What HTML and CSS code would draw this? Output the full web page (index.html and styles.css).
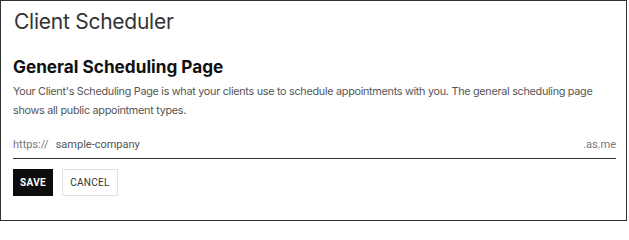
FILE: index.html
```html
<!DOCTYPE html>
<html>
<head>
<meta charset="utf-8">
<link rel="stylesheet" href="styles.css">
</head>
<body>
<div class="card">
  <h1 class="title">Client Scheduler</h1>
  <h2 class="section">General Scheduling Page</h2>
  <p class="desc">Your Client's Scheduling Page is what your clients use to schedule appointments with you. The general scheduling page shows all public appointment types.</p>
  <div class="field">
    <span class="prefix">https://</span>
    <span class="value">sample-company</span>
    <span class="suffix">.as.me</span>
  </div>
  <div class="actions">
    <button class="btn btn-save">SAVE</button>
    <button class="btn btn-cancel">CANCEL</button>
  </div>
</div>
</body>
</html>
```
FILE: styles.css
```css
html, body {
  margin: 0;
  padding: 0;
  background: #fff;
}
.card {
  box-sizing: border-box;
  width: 627px;
  height: 221px;
  border: 1px solid #333;
  padding: 8px 12px 0 12px;
  font-family: Inter, "Noto Sans", sans-serif;
}
.title {
  margin: 0 0 0 1px;
  font-size: 21px;
  letter-spacing: -0.25px;
  font-weight: 400;
  line-height: 26px;
  color: #333;
}
.section {
  margin: 21px 0 0 0;
  font-size: 17.2px;
  font-weight: 700;
  line-height: 22px;
  color: #111;
}
.desc {
  margin: 4px 0 0 0;
  font-size: 10.8px;
  letter-spacing: -0.28px;
  line-height: 19px;
  color: #555;
  max-width: 603px;
}
.field {
  display: flex;
  align-items: baseline;
  margin-top: 18px;
  padding: 0 0 6px 0;
  border-bottom: 1.5px solid #333;
  width: 603px;
  font-family: Roboto, "Liberation Sans", sans-serif;
  font-size: 11px;
  line-height: 14px;
}
.prefix {
  color: #777;
  margin-right: 7px;
}
.value {
  color: #555;
  flex: 1;
}
.suffix {
  color: #777;
}
.actions {
  display: flex;
  gap: 9px;
  margin-top: 10px;
}
.btn {
  box-sizing: border-box;
  height: 27px;
  font-family: Roboto, "Liberation Sans", sans-serif;
  font-size: 10px;
  letter-spacing: 0.3px;
  padding: 0;
  border-radius: 0;
  cursor: pointer;
}
.btn-save {
  width: 40px;
  background: #0d0d0d;
  color: #fff;
  font-weight: 700;
  border: 1px solid #0d0d0d;
}
.btn-cancel {
  width: 56px;
  background: #fff;
  color: #333;
  font-weight: 400;
  border: 1px solid #e2e2e2;
}
```
